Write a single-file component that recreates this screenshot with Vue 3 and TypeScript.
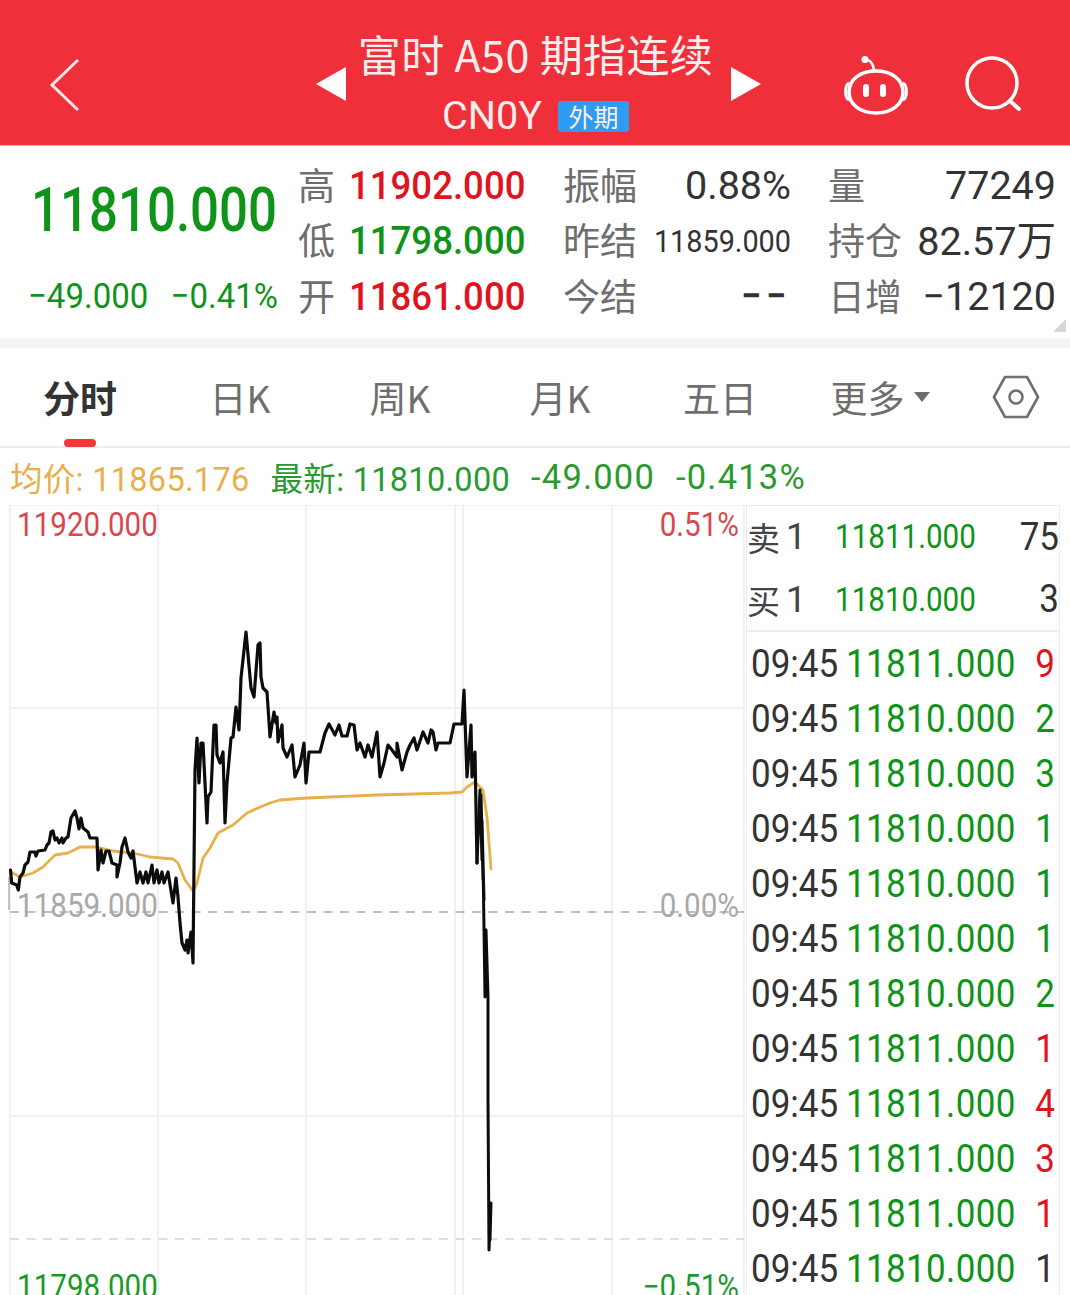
<template>
  <div class="screen">
    <header class="top">
      <svg class="top__back" width="34" height="56" viewBox="0 0 34 56">
        <path d="M30 3 L4 28 L30 53" fill="none" stroke="#fbe6e6" stroke-width="3" />
      </svg>
      <span class="tri tri--left"></span>
      <div class="top__title">
        <div class="top__name">富时 A50 期指连续</div>
        <div class="top__code">
          <span>CN0Y</span>
          <span class="top__badge">外期</span>
        </div>
      </div>
      <span class="tri tri--right"></span>
      <svg class="top__robot" width="64" height="60" viewBox="0 0 64 60">
        <circle cx="21" cy="3.5" r="3.5" fill="#fff" />
        <path d="M21 3.5 C26 3.5 29 7 30 14" fill="none" stroke="#fff" stroke-width="2.6" />
        <path
          d="M32 15 C47 15 59 23 59 36 C59 49 47 57 32 57 C17 57 5 49 5 36 C5 23 17 15 32 15 Z"
          fill="none"
          stroke="#fff"
          stroke-width="3.6"
        />
        <path d="M5 27 C0.5 29 0.5 42 5 44 M59 27 C63.5 29 63.5 42 59 44" fill="none" stroke="#fff" stroke-width="3" />
        <rect x="19" y="28" width="6" height="13" rx="3" fill="#fff" />
        <rect x="36" y="28" width="6" height="13" rx="3" fill="#fff" />
      </svg>
      <svg class="top__search" width="58" height="58" viewBox="0 0 58 58">
        <circle cx="27" cy="27" r="25" fill="none" stroke="#fff" stroke-width="3.5" />
        <path d="M45 45 L54 53" fill="none" stroke="#fff" stroke-width="4" stroke-linecap="round" />
      </svg>
    </header>

    <section class="quote">
      <div class="quote__main">
        <div class="quote__price num">11810.000</div>
        <div class="quote__change num">
          <span>−49.000</span>
          <span>−0.41%</span>
        </div>
      </div>
      <div class="quote__grid">
        <template v-for="row in quoteRows" :key="row.low">
          <span class="lbl">{{ row.low }}</span>
          <span class="num val val--first" :class="row.lowClass">{{ row.lowVal }}</span>
          <span class="lbl">{{ row.mid }}</span>
          <span class="num val val--right" :class="row.midClass">{{ row.midVal }}</span>
          <span class="lbl lbl--end">{{ row.end }}</span>
          <span class="num val val--right">{{ row.endVal }}</span>
        </template>
      </div>
      <span class="quote__corner"></span>
    </section>

    <div class="strip"></div>

    <nav class="tabs">
      <div v-for="(tab, i) in tabs" :key="tab" class="tabs__item" :class="{ 'tabs__item--on': i === 0 }">
        {{ tab }}
        <span v-if="tab === '更多'" class="tabs__caret"></span>
      </div>
      <div class="tabs__item">
        <svg width="48" height="44" viewBox="0 0 48 44">
          <path d="M13 2 H35 L46 22 L35 42 H13 L2 22 Z" fill="none" stroke="#6f6f6f" stroke-width="2.6" stroke-linejoin="round" />
          <circle cx="24" cy="22" r="6.5" fill="none" stroke="#6f6f6f" stroke-width="2.6" />
        </svg>
      </div>
    </nav>

    <div class="legend">
      <span class="legend__avg">均价: 11865.176</span>
      <span>最新: 11810.000</span>
      <span class="legend__chg">-49.000</span>
      <span class="legend__chg">-0.413%</span>
    </div>

    <div class="body">
      <div class="chart">
        <svg class="chart__svg" width="746" height="790" viewBox="0 505 746 790">
          <path v-for="x in gridX" :key="x" :d="`M${x} 505 V1295`" class="grid" />
          <path v-for="y in gridY" :key="y" :d="`M10 ${y} H744`" class="grid" />
          <path d="M10 912 H744" class="dash" />
          <path d="M10 1239 H744" class="dash dash--pale" />
          <path d="M9 877 V910" stroke="#8a8a8a" stroke-width="1" />
          <polyline :points="avgLine" class="line line--avg" />
          <polyline :points="priceLine" class="line line--price" />
          <polyline :points="tailLine" class="line line--tail" />
        </svg>
        <span class="tag tag--top tag--up">11920.000</span>
        <span class="tag tag--top tag--pct tag--up">0.51%</span>
        <span class="tag tag--mid">11859.000</span>
        <span class="tag tag--mid tag--pct">0.00%</span>
        <span class="tag tag--bot tag--down">11798.000</span>
        <span class="tag tag--bot tag--pct tag--down">−0.51%</span>
      </div>

      <aside class="side">
        <div class="book">
          <div v-for="b in book" :key="b.name" class="book__row">
            <span class="book__name">{{ b.name }}</span>
            <span class="book__lvl num">1</span>
            <span class="book__price num">{{ b.price }}</span>
            <span class="book__qty num">{{ b.qty }}</span>
          </div>
        </div>
        <div class="trades">
          <div v-for="(t, i) in trades" :key="i" class="trades__row num">
            <span class="trades__time">09:45</span>
            <span class="trades__price">{{ t.price }}</span>
            <span :class="t.side">{{ t.vol }}</span>
          </div>
        </div>
      </aside>
    </div>
  </div>
</template>

<script setup lang="ts">
interface Trade {
  price: string
  vol: number
  side: 'is-up' | 'is-down' | 'is-flat'
}

const quoteRows = [
  { low: '高', lowVal: '11902.000', lowClass: 'is-up', mid: '振幅', midVal: '0.88%', midClass: '', end: '量', endVal: '77249' },
  { low: '低', lowVal: '11798.000', lowClass: 'is-down', mid: '昨结', midVal: '11859.000', midClass: 'val--small', end: '持仓', endVal: '82.57万' },
  { low: '开', lowVal: '11861.000', lowClass: 'is-up', mid: '今结', midVal: '−−', midClass: 'val--gap', end: '日增', endVal: '−12120' },
]

const tabs = ['分时', '日K', '周K', '月K', '五日', '更多']

const gridX = [10, 158, 306, 455, 463, 612, 744]
const gridY = [505, 708, 1116]

const book = [
  { name: '卖', price: '11811.000', qty: 75 },
  { name: '买', price: '11810.000', qty: 3 },
]

const trades: Trade[] = [
  { price: '11811.000', vol: 9, side: 'is-up' },
  { price: '11810.000', vol: 2, side: 'is-down' },
  { price: '11810.000', vol: 3, side: 'is-down' },
  { price: '11810.000', vol: 1, side: 'is-down' },
  { price: '11810.000', vol: 1, side: 'is-down' },
  { price: '11810.000', vol: 1, side: 'is-down' },
  { price: '11810.000', vol: 2, side: 'is-down' },
  { price: '11811.000', vol: 1, side: 'is-up' },
  { price: '11811.000', vol: 4, side: 'is-up' },
  { price: '11811.000', vol: 3, side: 'is-up' },
  { price: '11811.000', vol: 1, side: 'is-up' },
  { price: '11810.000', vol: 1, side: 'is-flat' },
]

// traced off the reference, page coordinates
const priceLine =
  '10.5,870 11.7,883 16.7,885 18.3,890 20,877 23,873 25,865 28,862 30,852 35,852 36,856 38,851 45,850 47,845 49,843 51,832 53,831 55,840 57,838 59,843 62,838 63,843 66,838 68,837 71,818 75,811 77,818 79,829 81,818 83,828 88,832 90,838 97,838 98,870 101,850 103,863 106,851 109,851 112,863 117,865 117,877 120,863 122,847 125,838 128,852 131,858 133,851 135,867 137,883 140,872 143,883 146,872 148,883 152,865 154,883 157,870 159,883 162,872 164,883 168,872 173,903 176,878 178,897 180,923 182,943 185,950 187,940 188,953 191,932 193,963 195,770 197,738 199,783 201,743 203,743 207,823 208,797 211,792 214,725 216,725 217,755 220,763 223,752 225,823 227,783 231,738 233,737 236,707 239,730 241,678 246,632 251,688 254,697 258,645 260,643 261,677 263,688 267,692 270,737 274,712 276,723 277,717 278,742 282,725 283,748 287,757 292,745 295,777 300,765 304,743 306,783 309,752 320,752 325,733 329,724 335,735 339,725 342,736 347,736 350,724 354,725 357,750 360,743 365,757 368,745 372,757 377,732 380,777 384,763 388,745 392,750 397,757 397,743 402,770 407,752 410,745 414,738 417,750 423,732 428,743 431,730 433,732 436,750 438,743 450,743 454,724 462,724 464,690 467,777 471,725 472,777 475,752 477,863'
const tailLine =
  '477,863 480,790 482,860 481,795 483,880 482,820 484,900 483,860 485,997 486,930 488,996 488,1100 489,1250 491,1203 490,1240'
const avgLine =
  '11,872 20,877 33,873 43,867 55,855 68,853 80,847 97,847 113,851 133,853 150,857 173,859 178,863 185,880 193,891 197,883 203,858 210,848 218,833 233,825 247,813 258,808 270,803 280,800 307,798 377,795 450,793 462,792 467,787 475,782 483,790 487,817 491,869'
</script>

<style scoped>
.screen {
  width: 1070px;
  height: 1295px;
  overflow: hidden;
  background: #fff;
  font-family: 'Noto Sans CJK SC', 'Noto Sans', sans-serif;
  color: #333;
}

.num {
  font-family: Roboto, 'Noto Sans CJK SC', sans-serif;
}

.is-up {
  color: #e0141e;
}

.is-down {
  color: #0e9418;
}

.is-flat {
  color: #333;
}

.top {
  height: 146px;
  box-sizing: border-box;
  background: #ef303b;
  display: flex;
  align-items: center;
  color: #fdeeee;
  border-bottom: 1px solid #f6a9a9;
}

.top__back {
  margin-left: 48px;
  margin-top: 24px;
}

.tri {
  width: 0;
  height: 0;
  margin-top: 22px;
  border-top: 17px solid transparent;
  border-bottom: 17px solid transparent;
}

.tri--left {
  margin-left: 234px;
  border-right: 30px solid #fff;
}

.tri--right {
  border-left: 30px solid #fff;
}

.top__title {
  align-self: flex-start;
  width: 353px;
  margin: 0 19px 0 13px;
  padding-top: 23px;
  display: flex;
  flex-direction: column;
  align-items: center;
}

.top__name {
  font-size: 43px;
  line-height: 60px;
  letter-spacing: 0.4px;
  white-space: nowrap;
}

.top__code {
  margin-top: 3px;
  font-family: Roboto, sans-serif;
  font-size: 39.5px;
  line-height: 60px;
  display: flex;
  align-items: center;
  gap: 16px;
}

.top__badge {
  width: 71px;
  height: 31px;
  background: #2e9cf0;
  border-radius: 3px;
  font-family: 'Noto Sans CJK SC', sans-serif;
  font-size: 25px;
  line-height: 31px;
  text-align: center;
}

.top__robot {
  margin-left: 83px;
  margin-top: 27px;
}

.top__search {
  margin-left: 57px;
  margin-top: 24px;
}

.quote {
  position: relative;
  height: 192px;
  display: flex;
}

.quote__main {
  width: 298px;
  padding-top: 22px;
  box-sizing: border-box;
}

.quote__price {
  margin-left: 31px;
  font-size: 51px;
  font-weight: 500;
  line-height: 86px;
  color: #0e9418;
  transform: scaleY(1.18);
  white-space: nowrap;
}

.quote__change {
  margin: 20px 0 0 28px;
  width: 250px;
  display: flex;
  justify-content: space-between;
  font-size: 33px;
  line-height: 44px;
  color: #0e9418;
  transform: scaleY(1.08);
}

.quote__grid {
  padding-top: 12px;
  display: grid;
  grid-template-columns: 51px 214px 74px 154px 111px 154px;
  grid-auto-rows: 55.5px;
  align-items: center;
}

.lbl {
  margin-top: -4px;
  font-size: 37px;
  color: #6e6e6e;
  white-space: nowrap;
}

.lbl--end {
  padding-left: 37px;
}

.val {
  font-size: 39.5px;
  line-height: 1.2;
  white-space: nowrap;
  color: #333;
}

.val--first {
  font-size: 36.6px;
  font-weight: 500;
  transform: scaleY(1.08);
}

.val.is-up {
  color: #e0141e;
}

.val.is-down {
  color: #0e9418;
}

.val--right {
  text-align: right;
}

.val--small {
  font-size: 28.8px;
  transform: scaleY(1.12);
}

.val--gap {
  font-weight: 700;
  font-size: 36px;
  letter-spacing: 5px;
}

.quote__corner {
  position: absolute;
  right: 4px;
  bottom: 6px;
  border-left: 13px solid transparent;
  border-bottom: 13px solid #d6d6d6;
}

.strip {
  height: 10px;
  background: #f5f5f5;
}

.tabs {
  position: relative;
  height: 100px;
  box-sizing: border-box;
  border-bottom: 2px solid #ededed;
  display: grid;
  grid-template-columns: repeat(6, 160px) 112px;
  align-items: center;
}

.tabs__item {
  position: relative;
  height: 100%;
  display: flex;
  align-items: center;
  justify-content: center;
  box-sizing: border-box;
  font-size: 37px;
  color: #6e6e6e;
}

.tabs__item--on {
  color: #333;
  font-weight: 700;
}

.tabs__item--on::after {
  content: '';
  position: absolute;
  left: 64px;
  bottom: -1px;
  width: 32px;
  height: 8px;
  border-radius: 4px;
  background: #ef3a3a;
}

.tabs__caret {
  margin-left: 9px;
  border-left: 8px solid transparent;
  border-right: 8px solid transparent;
  border-top: 10px solid #6e6e6e;
}

.legend {
  height: 57px;
  box-sizing: border-box;
  padding-left: 10px;
  display: flex;
  align-items: center;
  gap: 21px;
  font-family: Roboto, 'Noto Sans CJK SC', sans-serif;
  font-size: 32.5px;
  letter-spacing: 0.3px;
  color: #2a9a2f;
  white-space: nowrap;
}

.legend__avg {
  color: #e8b04c;
}

.legend__chg {
  font-size: 34.5px;
  letter-spacing: 1.2px;
}

.body {
  display: flex;
}

.chart {
  position: relative;
  width: 746px;
  height: 790px;
  flex: none;
}

.chart__svg {
  position: absolute;
  inset: 0;
}

.grid {
  stroke: #ececec;
  stroke-width: 1.5;
  fill: none;
}

.dash {
  stroke: #a9a9a9;
  stroke-width: 1.6;
  stroke-dasharray: 9 7.5;
  fill: none;
}

.dash--pale {
  stroke: #d9d6c2;
}

.line {
  fill: none;
  stroke-linejoin: round;
  stroke-linecap: round;
}

.line--price {
  stroke: #0c0c0c;
  stroke-width: 3.2;
}

.line--avg {
  stroke: #e8b04c;
  stroke-width: 2.8;
}

.line--tail {
  stroke: #0c0c0c;
  stroke-width: 3;
}

.tag {
  position: absolute;
  left: 17px;
  font-family: Roboto, sans-serif;
  font-size: 29.6px;
  line-height: 40px;
  color: #a8a8a8;
  transform: scaleY(1.12);
}

.tag--pct {
  left: auto;
  right: 7px;
}

.tag--top {
  top: 0;
}

.tag--mid {
  top: 381px;
}

.tag--bot {
  top: 762px;
}

.tag--up {
  color: #d9484f;
}

.tag--down {
  color: #1a9a2a;
}

.side {
  width: 314px;
  flex: none;
}

.book {
  height: 127px;
  box-sizing: border-box;
  border: 1.5px solid #ececec;
  border-bottom-width: 2px;
}

.book__row {
  height: 62.5px;
  display: grid;
  grid-template-columns: 39px 49px 150px 1fr;
  align-items: center;
}

.book__name {
  font-size: 33px;
  color: #444;
}

.book__lvl {
  font-size: 36px;
  color: #444;
}

.book__price {
  font-size: 29.6px;
  color: #0e9418;
  transform: scaleY(1.1);
}

.book__qty {
  font-size: 35px;
  text-align: right;
  color: #333;
  transform: scaleY(1.12);
}

.trades {
  padding: 5px 4px 0 4px;
  border-left: 1.5px solid #ececec;
  border-right: 1.5px solid #ececec;
  box-sizing: border-box;
}

.trades__row {
  height: 55px;
  display: grid;
  grid-template-columns: 95px 1fr auto;
  align-items: center;
  font-size: 35px;
}

.trades__row > span {
  transform: scaleY(1.12);
}

.trades__time {
  color: #333;
}

.trades__price {
  color: #0e9418;
  letter-spacing: 0.35px;
}
</style>
